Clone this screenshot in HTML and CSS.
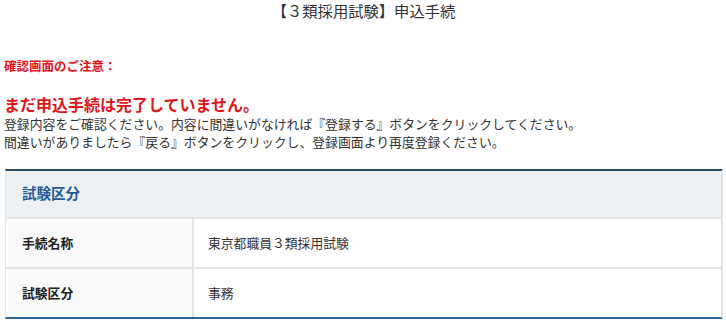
FILE: index.html
```html
<!DOCTYPE html>
<html lang="ja">
<head>
<meta charset="utf-8">
<title>申込手続</title>
<link rel="stylesheet" href="styles.css">
</head>
<body>
<div class="page">
  <h1 class="title">【３類採用試験】申込手続</h1>
  <p class="notice-label">確認画面のご注意：</p>
  <p class="notice-head">まだ申込手続は完了していません。</p>
  <p class="notice-body">登録内容をご確認ください。内容に間違いがなければ『登録する』ボタンをクリックしてください。<br>間違いがありましたら『戻る』ボタンをクリックし、登録画面より再度登録ください。</p>
  <div class="table">
    <div class="table-head">試験区分</div>
    <div class="row">
      <div class="cell label">手続名称</div>
      <div class="cell value">東京都職員３類採用試験</div>
    </div>
    <div class="row">
      <div class="cell label">試験区分</div>
      <div class="cell value">事務</div>
    </div>
  </div>
</div>
</body>
</html>
```
FILE: styles.css
```css
html, body {
  margin: 0;
  padding: 0;
  background: #fff;
}
body {
  font-family: "Noto Sans CJK JP", "Noto Sans", sans-serif;
  color: #333;
}
.page {
  padding: 1px 3px 0 4px;
}
.title {
  margin: 0;
  font-size: 15.3px;
  font-weight: normal;
  line-height: 18px;
  text-align: center;
  color: #333;
}
.notice-label {
  margin: 38px 0 0;
  font-size: 12.5px;
  font-weight: bold;
  line-height: 18px;
  color: #e0161b;
}
.notice-head {
  margin: 18px 0 0;
  font-size: 16px;
  font-weight: bold;
  line-height: 22px;
  color: #e0161b;
}
.notice-body {
  margin: 0;
  font-size: 12.85px;
  line-height: 18px;
  color: #333;
}
.table {
  margin: 18px 0 0 1px;
  border-top: 2px solid #1f4e72;
  border-bottom: 2px solid #2c6698;
  border-left: 1px solid #e4e4e4;
  border-right: 2px solid #e4e4e4;
}
.table-head {
  height: 46px;
  box-sizing: border-box;
  display: flex;
  align-items: center;
  padding: 0 0 4px 16px;
  background: #eef1f4;
  font-size: 14.5px;
  font-weight: bold;
  color: #1f5c96;
}
.row {
  display: grid;
  grid-template-columns: 188px 1fr;
  border-top: 2px solid #e5e5e5;
}
.cell {
  height: 48px;
  box-sizing: border-box;
  display: flex;
  align-items: center;
  padding-bottom: 2px;
  font-size: 12.8px;
}
.label {
  padding-left: 16px;
  background: #fafafa;
  font-weight: bold;
  color: #222;
  border-right: 2px solid #e5e5e5;
}
.value {
  padding-left: 14px;
  color: #333;
}
```
